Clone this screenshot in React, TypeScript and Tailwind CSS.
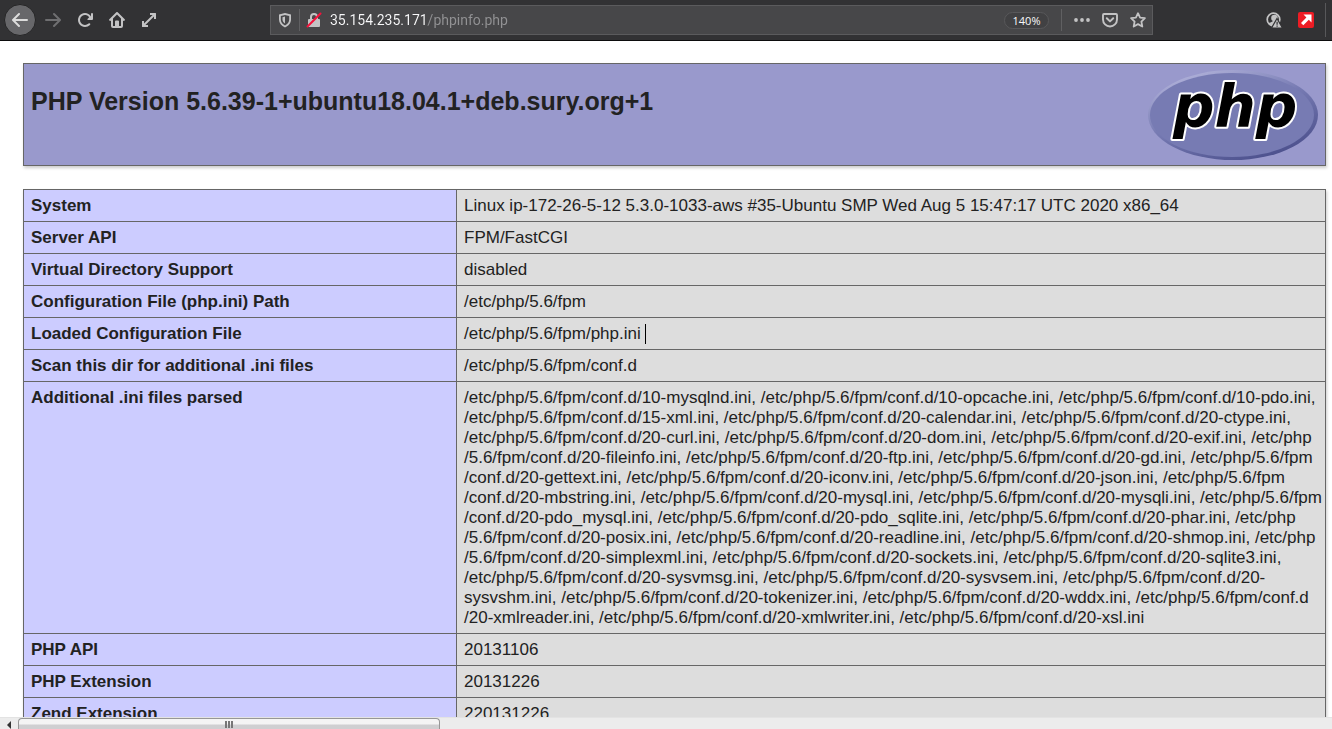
import React from "react";

const rows: { name: string; lines: string[]; caret?: boolean }[] = [
  { name: "System", lines: ["Linux ip-172-26-5-12 5.3.0-1033-aws #35-Ubuntu SMP Wed Aug 5 15:47:17 UTC 2020 x86_64"] },
  { name: "Server API", lines: ["FPM/FastCGI"] },
  { name: "Virtual Directory Support", lines: ["disabled"] },
  { name: "Configuration File (php.ini) Path", lines: ["/etc/php/5.6/fpm"] },
  { name: "Loaded Configuration File", lines: ["/etc/php/5.6/fpm/php.ini"], caret: true },
  { name: "Scan this dir for additional .ini files", lines: ["/etc/php/5.6/fpm/conf.d"] },
  {
    name: "Additional .ini files parsed",
    lines: [
      "/etc/php/5.6/fpm/conf.d/10-mysqlnd.ini, /etc/php/5.6/fpm/conf.d/10-opcache.ini, /etc/php/5.6/fpm/conf.d/10-pdo.ini,",
      "/etc/php/5.6/fpm/conf.d/15-xml.ini, /etc/php/5.6/fpm/conf.d/20-calendar.ini, /etc/php/5.6/fpm/conf.d/20-ctype.ini,",
      "/etc/php/5.6/fpm/conf.d/20-curl.ini, /etc/php/5.6/fpm/conf.d/20-dom.ini, /etc/php/5.6/fpm/conf.d/20-exif.ini, /etc/php",
      "/5.6/fpm/conf.d/20-fileinfo.ini, /etc/php/5.6/fpm/conf.d/20-ftp.ini, /etc/php/5.6/fpm/conf.d/20-gd.ini, /etc/php/5.6/fpm",
      "/conf.d/20-gettext.ini, /etc/php/5.6/fpm/conf.d/20-iconv.ini, /etc/php/5.6/fpm/conf.d/20-json.ini, /etc/php/5.6/fpm",
      "/conf.d/20-mbstring.ini, /etc/php/5.6/fpm/conf.d/20-mysql.ini, /etc/php/5.6/fpm/conf.d/20-mysqli.ini, /etc/php/5.6/fpm",
      "/conf.d/20-pdo_mysql.ini, /etc/php/5.6/fpm/conf.d/20-pdo_sqlite.ini, /etc/php/5.6/fpm/conf.d/20-phar.ini, /etc/php",
      "/5.6/fpm/conf.d/20-posix.ini, /etc/php/5.6/fpm/conf.d/20-readline.ini, /etc/php/5.6/fpm/conf.d/20-shmop.ini, /etc/php",
      "/5.6/fpm/conf.d/20-simplexml.ini, /etc/php/5.6/fpm/conf.d/20-sockets.ini, /etc/php/5.6/fpm/conf.d/20-sqlite3.ini,",
      "/etc/php/5.6/fpm/conf.d/20-sysvmsg.ini, /etc/php/5.6/fpm/conf.d/20-sysvsem.ini, /etc/php/5.6/fpm/conf.d/20-",
      "sysvshm.ini, /etc/php/5.6/fpm/conf.d/20-tokenizer.ini, /etc/php/5.6/fpm/conf.d/20-wddx.ini, /etc/php/5.6/fpm/conf.d",
      "/20-xmlreader.ini, /etc/php/5.6/fpm/conf.d/20-xmlwriter.ini, /etc/php/5.6/fpm/conf.d/20-xsl.ini",
    ],
  },
  { name: "PHP API", lines: ["20131106"] },
  { name: "PHP Extension", lines: ["20131226"] },
  { name: "Zend Extension", lines: ["220131226"] },
];

function IconButton({ label, className = "", children }: { label: string; className?: string; children: React.ReactNode }) {
  return (
    <button type="button" aria-label={label} className={`flex shrink-0 items-center justify-center ${className}`}>
      <svg viewBox="0 0 16 16" className="size-4" fill="currentColor" aria-hidden="true">
        {children}
      </svg>
    </button>
  );
}

const ARROW_LEFT =
  "M15 7H3.414l4.293-4.293a1 1 0 0 0-1.414-1.414l-6 6a1 1 0 0 0 0 1.414l6 6a1 1 0 0 0 1.414-1.414L3.414 9H15a1 1 0 0 0 0-2z";

function Toolbar() {
  return (
    <header className="flex h-[41px] shrink-0 items-center border-b border-[#0c0c0d] bg-[#323234] text-[#c3c3c4]">
      <nav className="flex w-[270px] shrink-0 items-center pl-1">
        <IconButton label="Back" className="mr-px size-8 rounded-full border border-[#252526] bg-[#67676a] text-[#dcdcdc]">
          <path d={ARROW_LEFT} />
        </IconButton>
        <IconButton label="Forward" className="size-8 text-[#6f6f71]">
          <path d={ARROW_LEFT} transform="translate(16 0) scale(-1 1)" />
        </IconButton>
        <IconButton label="Reload" className="size-8">
          <path d="M15 1a1 1 0 0 0-1 1v2.4A7 7 0 1 0 8 15a7 7 0 0 0 5-2.05 1 1 0 0 0-1.45-1.4A5 5 0 1 1 12.2 5.3L10.5 7a.6.6 0 0 0 .4 1H15a1 1 0 0 0 1-1V2a1 1 0 0 0-1-1z" />
        </IconButton>
        <IconButton label="Home" className="size-8">
          <path
            fillRule="evenodd"
            d="M8.7.3a1 1 0 0 0-1.4 0l-7 7a1 1 0 0 0 1.4 1.4L2 8.4V14a2 2 0 0 0 2 2h8a2 2 0 0 0 2-2V8.4l.3.3a1 1 0 0 0 1.4-1.4zM4 6.4l4-4 4 4V14h-2v-4.5a1 1 0 0 0-1-1H7a1 1 0 0 0-1 1V14H4z"
          />
          <path d="M7.5 11h1v1h-1z" />
        </IconButton>
        <IconButton label="Full screen" className="size-8">
          <path d="M9 1h5.500a.5.5 0 0 1 .5.5V7h-2V4.400L4.400 13H7v2H1.500a.5.5 0 0 1-.5-.5V9h2v2.600L11.600 3H9z" />
        </IconButton>
      </nav>

      <div className="flex h-[30px] min-w-0 flex-1 items-center border border-[#5b5b5d] bg-[#474749] pl-1.5 pr-1.5">
        <IconButton label="Tracking protection" className="mr-1.5 size-4">
          <path
            fillRule="evenodd"
            d="M8 1l6 1.600v4.900c0 3.600-2.400 6.300-6 7.900-3.600-1.600-6-4.300-6-7.900V2.600zM8 2.900L3.800 4v3.600c0 2.600 1.600 4.500 4.200 5.800 2.600-1.300 4.200-3.200 4.200-5.800V4z"
          />
          <path d="M8 4.600v6.900c-1.600-1-2.500-2.300-2.500-4V5.300z" />
        </IconButton>
        <span className="h-[22px] w-px bg-[#606062]" />
        <IconButton label="Connection is not secure" className="ml-1.5 mr-2 size-4">
          <path fillRule="evenodd" d="M4 7V5a4 4 0 0 1 8 0v2h1a1 1 0 0 1 1 1v6a1 1 0 0 1-1 1H3a1 1 0 0 1-1-1V8a1 1 0 0 1 1-1zm2 0h4V5a2 2 0 0 0-4 0z" />
          <path d="M1.500 14.500L14.500 1.500" stroke="#f5133c" strokeWidth="2" strokeLinecap="round" />
        </IconButton>
        <input
          type="text"
          aria-label="Address"
          defaultValue="35.154.235.171/phpinfo.php"
          spellCheck={false}
          className="h-7 min-w-0 flex-1 bg-[linear-gradient(90deg,#f9f9fa_98px,#929294_98px)] bg-clip-text font-[Roboto,sans-serif] text-[14px] text-transparent outline-none"
        />
        <button
          type="button"
          className="mr-3 h-[17px] w-[45px] shrink-0 rounded-full border border-[#58585a] bg-[#414143] text-center font-['Open_Sans',sans-serif] text-[11px] leading-[15px] text-[#f9f9fa]"
        >
          140%
        </button>
        <span className="mr-3 h-[22px] w-px bg-[#606062]" />
        <IconButton label="Page actions" className="mr-3 size-4">
          <circle cx="2" cy="8" r="1.9" />
          <circle cx="8" cy="8" r="1.9" />
          <circle cx="14" cy="8" r="1.9" />
        </IconButton>
        <IconButton label="Save to Pocket" className="mr-3 size-4">
          <path d="M2 2h12a1 1 0 0 1 1 1v4.500a7 7 0 0 1-14 0V3a1 1 0 0 1 1-1z" fill="none" stroke="currentColor" strokeWidth="1.9" />
          <path d="M4.800 6.300L8 9.400l3.200-3.100" fill="none" stroke="currentColor" strokeWidth="2" strokeLinecap="round" strokeLinejoin="round" />
        </IconButton>
        <IconButton label="Bookmark this page" className="size-4">
          <path
            d="M8 1.200l2.100 4.400 4.800.6-3.500 3.400.9 4.900L8 12.100l-4.300 2.400.9-4.900L1.100 6.200l4.800-.6z"
            fill="none"
            stroke="currentColor"
            strokeWidth="1.8"
            strokeLinejoin="round"
          />
        </IconButton>
      </div>

      <div className="flex w-[179px] shrink-0 items-center justify-end">
        <IconButton label="Account" className="mr-4 size-4">
          <circle cx="7.500" cy="7.500" r="6.300" fill="none" stroke="currentColor" strokeWidth="1.700" />
          <circle cx="8.500" cy="6" r="3.300" />
          <path d="M2.500 11.500C4 10 5.500 10.500 7 9h3l2 4-4.500 1.500z" />
          <path d="M11 6.500L16.500 16h-11z" stroke="#323234" strokeWidth="1.200" />
          <path d="M10.500 9.800h1.200v3h-1.200zM10.500 13.600h1.200v1.100h-1.200z" fill="#323234" />
        </IconButton>
        <IconButton label="Extension" className="mr-[11px] size-4">
          <rect width="16" height="16" rx="2" fill="#ed1c24" />
          <path d="M5.500 2.500h8v8l-2.700-2.700L5.300 13.300 3 11l5.400-5.500z" fill="#fff" />
        </IconButton>
        <span className="mr-1.5 h-[34px] w-px bg-[#58585a]" />
      </div>
    </header>
  );
}

function PhpLogo() {
  return (
    <svg viewBox="0 0 170 90" className="h-[90px] w-[170px] shrink-0" role="img" aria-label="PHP logo">
      <defs>
        <linearGradient id="rim" x1="0.2" y1="0" x2="0.8" y2="1">
          <stop offset="0" stopColor="#b4b5dc" />
          <stop offset="0.45" stopColor="#777bb3" />
          <stop offset="1" stopColor="#484c89" />
        </linearGradient>
      </defs>
      <ellipse cx="85" cy="45" rx="85" ry="45" fill="url(#rim)" />
      <ellipse cx="84" cy="45" rx="82" ry="42" fill="#777bb3" />
      <text
        x="25"
        y="57"
        className="font-['DejaVu_Sans',sans-serif] text-[58px] font-bold italic"
        fill="#000"
        stroke="#fff"
        strokeWidth="4"
        strokeLinejoin="round"
        paintOrder="stroke"
      >
        php
      </text>
    </svg>
  );
}

export default function App() {
  return (
    <div className="flex h-screen flex-col overflow-hidden bg-white font-['Liberation_Sans',Arial,sans-serif] text-[#222222]">
      <Toolbar />
      <main className="min-h-0 flex-1 overflow-hidden pl-[23px] pr-1.5 pt-[22px]">
        <section className="mb-[23px] flex items-start justify-between border border-[#666666] bg-[#9999cc] px-[7px] pb-[5px] pt-[6px] shadow-[1px_2px_3px_#cccccc]">
          <h1 className="pt-4 text-[25px] font-bold leading-[30px]">PHP Version 5.6.39-1+ubuntu18.04.1+deb.sury.org+1</h1>
          <PhpLogo />
        </section>
        <table className="w-full table-fixed border-collapse text-[17px] leading-5 shadow-[1px_2px_3px_#cccccc]">
          <colgroup>
            <col className="w-[433px]" />
            <col />
          </colgroup>
          <tbody>
            {rows.map((row) => (
              <tr key={row.name}>
                <th scope="row" className="border border-[#666666] bg-[#ccccff] px-[7px] pb-[5px] pt-[6px] text-left align-top font-bold">
                  {row.name}
                </th>
                <td className="whitespace-nowrap border border-[#666666] bg-[#dddddd] px-[7px] pb-[5px] pt-[6px] align-top">
                  {row.lines.map((line, i) => (
                    <React.Fragment key={line}>
                      {i > 0 && <br />}
                      {line}
                    </React.Fragment>
                  ))}
                  {row.caret && <span className="ml-1 inline-block h-5 w-px bg-black align-top" />}
                </td>
              </tr>
            ))}
          </tbody>
        </table>
      </main>
      <footer className="flex h-3 shrink-0 overflow-hidden border-t border-[#e3e3e3] bg-[#ececec]">
        <button type="button" aria-label="Scroll left" className="flex w-[18px] shrink-0 items-start justify-center pt-[3px]">
          <svg viewBox="0 0 4 8" className="h-2 w-1" aria-hidden="true">
            <path d="M4 0v8L0 4z" fill="#333" />
          </svg>
        </button>
        <div className="flex w-[422px] items-start justify-center gap-px rounded-t-sm border border-b-0 border-[#979797] bg-linear-to-b from-[#f4f4f4] from-50% to-[#cfcfd1] to-60% pt-0.5">
          <span className="h-[7px] w-0.5 bg-[#777]" />
          <span className="h-[7px] w-0.5 bg-[#777]" />
          <span className="h-[7px] w-0.5 bg-[#777]" />
        </div>
      </footer>
    </div>
  );
}
